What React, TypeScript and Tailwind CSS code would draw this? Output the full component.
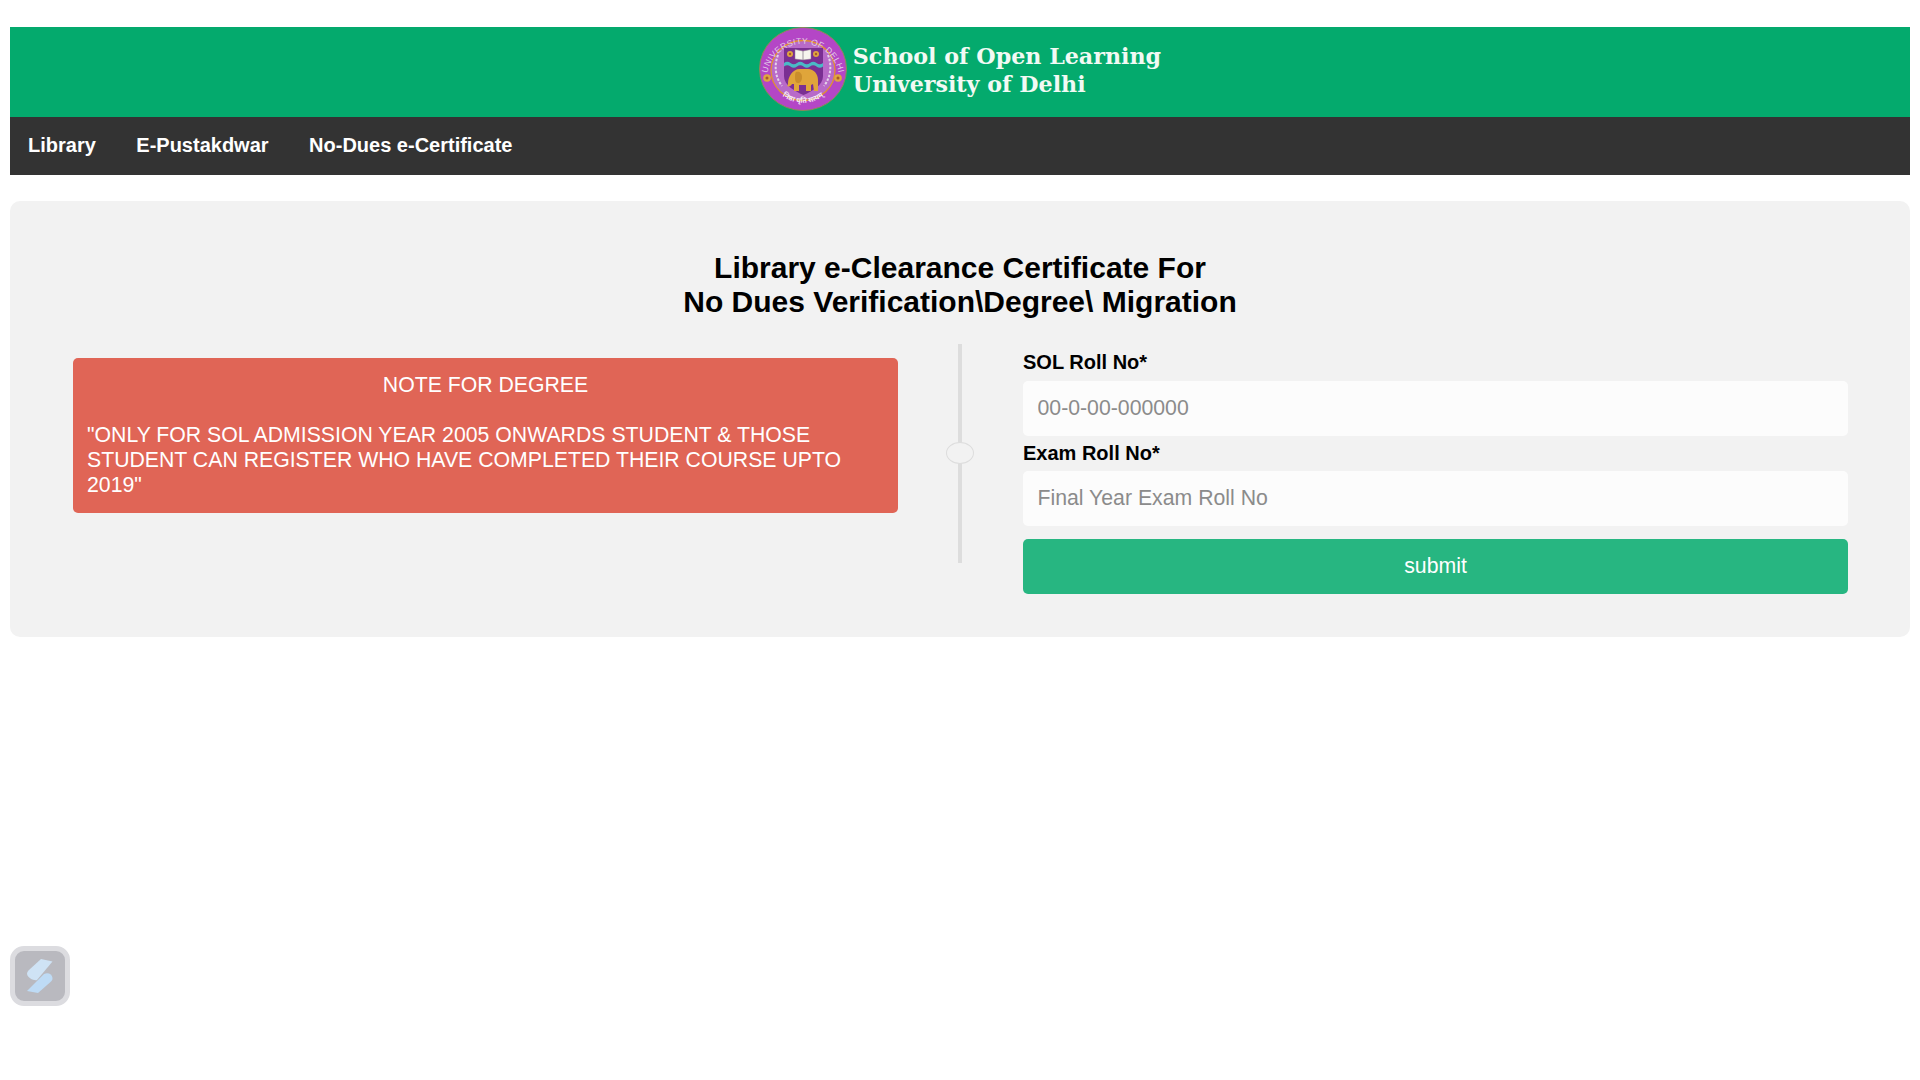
const sans = "font-['Liberation_Sans',Arial,sans-serif]";

function Flower({ cx, cy, r }: { cx: number; cy: number; r: number }) {
  return (
    <g>
      <circle cx={cx} cy={cy} r={r} fill="#e0a63f" />
      <circle cx={cx} cy={cy} r={r * 0.4} fill="#a85a2a" />
    </g>
  );
}

/** University seal, hand drawn since there is no image to load. */
function Seal() {
  return (
    <svg width="88" height="84" viewBox="0 0 88 84" className="shrink-0">
      <defs>
        <path id="seal-top" d="M 9 60 A 36 35 0 1 1 79 60" />
        <path id="seal-bottom" d="M 20 66 A 32 29 0 0 0 68 66" />
      </defs>
      <ellipse cx="44" cy="42" rx="43.500" ry="41.500" fill="#b446c6" stroke="#8d8a55" strokeWidth="1" />
      <ellipse cx="44" cy="43.500" rx="32" ry="30" fill="#b86ac8" stroke="#e2922e" strokeWidth="1.300" />
      <text fontSize="8.500" fill="#e2cde8" fontFamily="Liberation Sans, sans-serif" letterSpacing="0.400">
        <textPath href="#seal-top" startOffset="50%" textAnchor="middle">UNIVERSITY OF DELHI</textPath>
      </text>
      <text fontSize="7" fontWeight="700" fill="#f5ecf6" fontFamily="Noto Sans, sans-serif">
        <textPath href="#seal-bottom" startOffset="50%" textAnchor="middle">निष्ठा धृति सत्यम्</textPath>
      </text>
      <g fill="none" stroke="#e5d3ea" strokeWidth="2" strokeDasharray="2.500 1.500">
        <path d="M19 28c-4 10-3 22 4 31" />
        <path d="M69 28c4 10 3 22-4 31" />
      </g>
      <path d="M25 21h39v28c0 9-10 15-19.500 19C35 64 25 58 25 49z" fill="#7a2f92" />
      <path d="M36 22.500l8 1.500 8-1.500V32l-8 1-8-1z" fill="#f6f4ee" stroke="#8a7a90" strokeWidth="0.500" />
      <path d="M44 24v9" stroke="#7a6a80" strokeWidth="0.700" />
      <Flower cx={31} cy={27} r={3} />
      <Flower cx={57} cy={27} r={3} />
      <path d="M25 36q3.250-2.500 6.500 0t6.500 0 6.500 0 6.500 0 6.500 0 6.500 0v3.500q-3.250 2.500-6.500 0t-6.500 0-6.500 0-6.500 0-6.500 0-6.500 0z" fill="#4ab9c6" />
      <path d="M29 56c0-3 1-6 3-9 2-3 5-5 9-5h8c6 0 10 5 10 11v11h-4l-1-7-2 1v6h-5v-6h-7v6h-5v-7h-2c-1 2-3 3-5 2 1-1 1-2 1-3z" fill="#e0a53a" />
      <path d="M37 45c3-1 6 1 6 5s-2 6-4 6-3-2-3-5 0-5 1-6z" fill="#c98d2c" />
      <Flower cx={8} cy={51} r={3.800} />
      <Flower cx={79} cy={51} r={3.800} />
    </svg>
  );
}

function Field({ label, placeholder, labelClass }: { label: string; placeholder: string; labelClass: string }) {
  return (
    <div>
      <label className={`flex h-[35px] items-center text-[20px] leading-none font-bold text-black ${labelClass}`}>
        {label}
      </label>
      <input
        placeholder={placeholder}
        className="block h-[55px] w-full rounded-[5px] bg-[#fcfcfc] px-[14.5px] text-[21.25px] text-black outline-none placeholder:text-[#8b8b8b]"
      />
    </div>
  );
}

export default function App() {
  return (
    <div className={`${sans} min-h-[1080px] bg-white px-[10px] pt-[27px]`}>
      <header className="flex h-[90px] items-start justify-center bg-[#04aa6d]">
        <div className="flex items-start">
          <Seal />
          <div className="mt-[15px] ml-[6px] font-['DejaVu_Serif',serif] text-[22.2px] leading-[28px] font-bold text-[#f2faf4]">
            <div>School of Open Learning</div>
            <div>University of Delhi</div>
          </div>
        </div>
      </header>

      <nav className="flex h-[58px] items-center gap-[40.5px] bg-[#333333] px-[18px] pb-[2px] text-[20px] font-bold text-white">
        <a>Library</a>
        <a>E-Pustakdwar</a>
        <a>No-Dues e-Certificate</a>
      </nav>

      <main className="mt-[26px] h-[436px] rounded-[10px] bg-[#f2f2f2] pt-[50px] pr-[62px] pl-[63px]">
        <h1 className="pr-[1px] text-center text-[30px] leading-[34px] font-bold text-black">
          Library e-Clearance Certificate For
          <br />
          No Dues Verification\Degree\ Migration
        </h1>

        <div className="mt-[25px] flex">
          <div className="w-[825px] pt-[14px]">
            <div className="h-[155px] rounded-[5px] bg-[#e06556] px-[14px] pt-[15px] text-[21.25px] leading-[25px] text-white">
              <p className="text-center">NOTE FOR DEGREE</p>
              <p className="mt-[25px]">
                "ONLY FOR SOL ADMISSION YEAR 2005 ONWARDS STUDENT &amp; THOSE STUDENT CAN REGISTER WHO HAVE COMPLETED
                THEIR COURSE UPTO 2019"
              </p>
            </div>
          </div>

          <div className="relative mr-[61px] ml-[60px] h-[219px] w-[4px] bg-[#dddddd]">
            <span className="absolute top-[98px] left-[-12px] h-[22px] w-[28px] rounded-[50%] border border-[#dddddd] bg-[#f2f2f2]" />
          </div>

          <form className="w-[825px] pt-[2px]">
            <Field label="SOL Roll No*" placeholder="00-0-00-000000" labelClass="pb-[4px]" />
            <Field label="Exam Roll No*" placeholder="Final Year Exam Roll No" labelClass="pb-[2px]" />
            <button
              type="button"
              className="mt-[13px] block h-[55px] w-full rounded-[5px] bg-[#27b681] text-[21.25px] text-white"
            >
              submit
            </button>
          </form>
        </div>
      </main>

      <div className="fixed top-[946px] left-[10px] flex h-[60px] w-[60px] items-center justify-center rounded-[14px] border-[5px] border-[#dcdce0] bg-[#b9b9bf]">
        <svg width="26" height="34" viewBox="0 0 26 34">
          <path d="M14 0l11.500 2.500L10 21c-3 1-9-2-10-6 0-2 1-3 2-4z" fill="#cfe3f5" />
          <path d="M17 15c4-2 8 0 8.500 4 0 2-1 3-2 4L11 34 0 32z" fill="#bedbf5" />
        </svg>
      </div>
    </div>
  );
}
